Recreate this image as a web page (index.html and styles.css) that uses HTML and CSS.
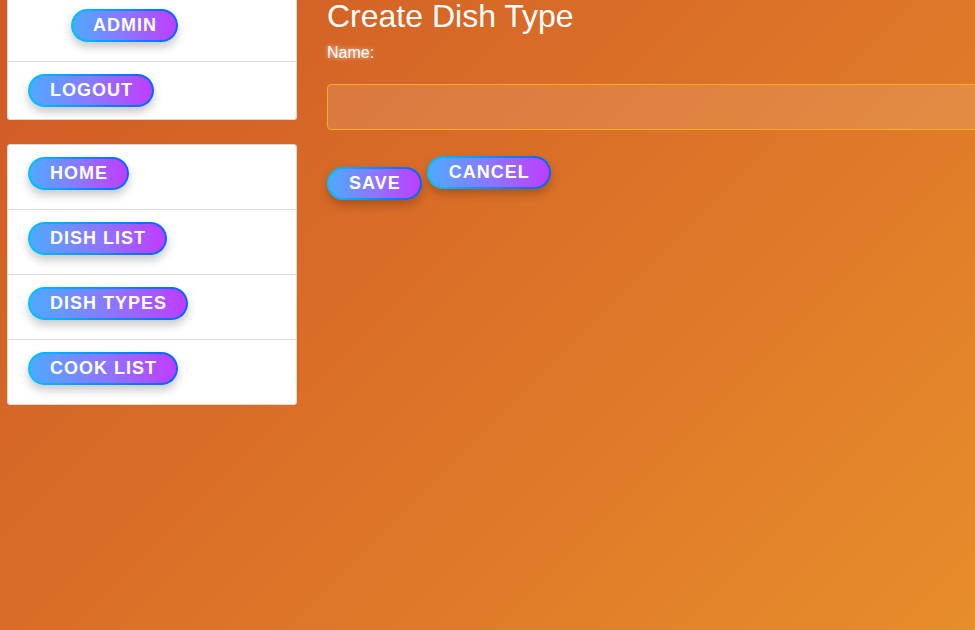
FILE: index.html
```html
<!DOCTYPE html>
<html lang="en">
<head>
<meta charset="utf-8">
<title>Create Dish Type</title>
<link rel="stylesheet" href="styles.css">
</head>
<body>
<div class="page">
  <aside class="sidebar">
    <ul class="card card-top">
      <li class="row row-admin"><a class="btn" href="#">Admin</a></li>
      <li class="row"><a class="btn" href="#">Logout</a></li>
    </ul>
    <ul class="card">
      <li class="row"><a class="btn" href="#">Home</a></li>
      <li class="row"><a class="btn" href="#">Dish List</a></li>
      <li class="row"><a class="btn" href="#">Dish Types</a></li>
      <li class="row"><a class="btn" href="#">Cook List</a></li>
    </ul>
  </aside>
  <main class="main">
    <h1 class="title">Create Dish Type</h1>
    <form class="form">
      <label class="label" for="name">Name:</label>
      <input class="input" id="name" type="text">
      <div class="actions">
        <button class="btn btn-save" type="button">Save</button>
        <a class="btn" href="#">Cancel</a>
      </div>
    </form>
  </main>
</div>
</body>
</html>
```
FILE: styles.css
```css
html, body {
  margin: 0;
  padding: 0;
  height: 100%;
  overflow: hidden;
}
body {
  background: linear-gradient(135deg, #cf5a25 0%, #dc7228 50%, #e78d2b 100%);
  font-family: "Liberation Sans", Arial, sans-serif;
  color: #fff;
}
.page {
  display: flex;
  gap: 30px;
  padding-left: 7px;
}
.sidebar {
  width: 290px;
  flex: none;
  display: flex;
  flex-direction: column;
  gap: 24px;
  margin-top: -3px;
}
.card {
  list-style: none;
  margin: 0;
  padding: 0;
  background: #fff;
  border: 1px solid #d8d8d8;
  border-radius: 3px;
}
.card-top {
  border-top: none;
}
.row {
  height: 65px;
  box-sizing: border-box;
  padding: 12px 20px 0;
  border-bottom: 1px solid #dcdcdc;
}
.row:last-child {
  border-bottom: none;
  height: 64px;
}
.card-top .row:last-child {
  height: 57px;
}
.row-admin {
  padding-left: 63px;
}
.btn {
  display: inline-block;
  box-sizing: border-box;
  height: 33px;
  line-height: 29px;
  padding: 0 19px 0 20px;
  border: 2px solid transparent;
  border-radius: 17px;
  background:
    linear-gradient(90deg, #4fa9ff 0%, #8a78ff 50%, #bf3dff 100%) padding-box,
    linear-gradient(90deg, #00c2ff 0%, #0a7cff 70%, #0066ff 100%) border-box;
  box-shadow: 0 5px 10px rgba(0, 0, 0, 0.22);
  color: #fff;
  font-family: "Liberation Sans", Arial, sans-serif;
  font-size: 18px;
  font-weight: bold;
  letter-spacing: 1px;
  text-transform: uppercase;
  text-decoration: none;
  cursor: pointer;
}
.main {
  flex: 1;
  min-width: 0;
}
.title {
  margin: 0;
  font-size: 32px;
  font-weight: normal;
  line-height: 32px;
}
.form {
  display: flex;
  flex-direction: column;
  align-items: flex-start;
}
.label {
  margin-top: 12px;
  font-size: 16px;
  line-height: 18px;
  text-shadow: 0 0 4px rgba(255, 255, 255, 0.8);
}
.input {
  margin-top: 22px;
  width: 700px;
  height: 46px;
  box-sizing: border-box;
  border: 1px solid #f5aa2a;
  border-radius: 4px;
  background: rgba(255, 255, 255, 0.12);
  outline: none;
}
.actions {
  display: flex;
  align-items: flex-start;
  gap: 5px;
  margin-top: 26px;
}
.btn-save {
  margin-top: 11px;
}
```
